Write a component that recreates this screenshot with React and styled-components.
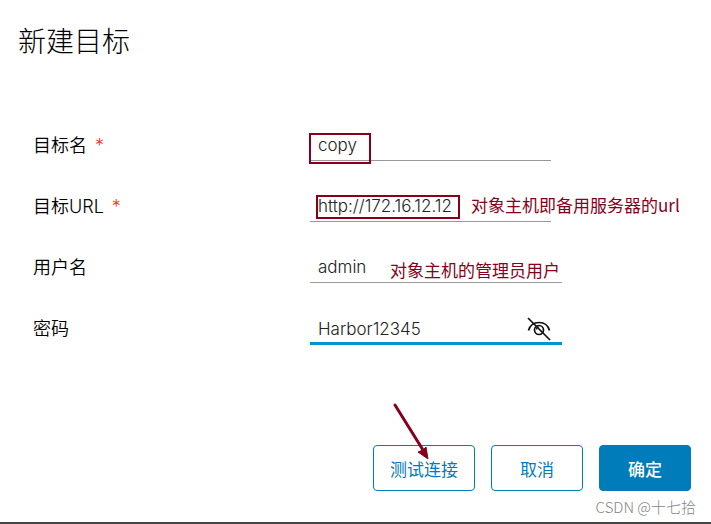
import React, { useState } from "react";
import styled, { createGlobalStyle } from "styled-components";

const GlobalStyle = createGlobalStyle`
  * { box-sizing: border-box; }
  body {
    margin: 0;
    background: #fff;
    color: #111;
    font-family: Inter, "Noto Sans CJK SC", sans-serif;
  }
`;

const MARK = "#86001c";

const Dialog = styled.main`
  position: relative;
  padding: 21px 20px 31px 18px;
  border-bottom: 2px solid #444;
`;

const Title = styled.h1`
  margin: 0;
  font-size: 28px;
  line-height: 42px;
  font-weight: 300;
  color: #000;
`;

const Form = styled.form`
  margin-top: 66px;
`;

const Fields = styled.div`
  display: grid;
  gap: 29px;
  padding-left: 15px;
`;

const Row = styled.div`
  display: grid;
  grid-template-columns: 277px 1fr;
`;

const Label = styled.label`
  font-size: 18px;
  line-height: 33px;
  height: 32px;
  font-weight: 350;
  color: #000;
`;

const Required = styled.span`
  margin-left: 8px;
  color: #dc3d22;
`;

const Control = styled.div`
  position: relative;
  display: flex;
  width: ${(p) => (p.$wide ? 252 : 241)}px;
`;

const Input = styled.input`
  width: 100%;
  height: ${(p) => (p.$active ? 33 : 32)}px;
  padding: ${(p) => (p.$active ? "4px 8px 0" : "0 8px")};
  border: 0;
  border-bottom: ${(p) => (p.$active ? "3px solid #0094d2" : "1px solid #999")};
  border-radius: 0;
  outline: none;
  background: transparent;
  color: #222;
  font: 350 17px "Inter", "Noto Sans CJK SC", sans-serif;
`;

const Toggle = styled.button`
  position: absolute;
  right: 10px;
  top: 4px;
  width: 26px;
  height: 26px;
  padding: 0;
  border: 0;
  background: none;
  color: #111;
  cursor: pointer;
  svg { display: block; }
`;

const Frame = styled.span`
  position: absolute;
  left: ${(p) => p.$left}px;
  top: ${(p) => p.$top}px;
  width: ${(p) => p.$width}px;
  height: ${(p) => p.$height}px;
  border: 2px solid ${MARK};
  pointer-events: none;
`;

const Note = styled.span`
  position: absolute;
  left: ${(p) => p.$left}px;
  top: ${(p) => p.$top}px;
  font-size: 17px;
  line-height: 26px;
  font-weight: 400;
  white-space: nowrap;
  color: ${MARK};
  font-family: "Noto Sans CJK SC", sans-serif;
  pointer-events: none;
`;

const Actions = styled.div`
  display: flex;
  justify-content: flex-end;
  gap: 16px;
  margin-top: 100px;
`;

const Button = styled.button`
  position: relative;
  min-width: 92px;
  height: 46px;
  padding: 0 16px;
  border: 1px solid #007cbb;
  border-radius: 4px;
  background: ${(p) => (p.$primary ? "#007cbb" : "#fff")};
  color: ${(p) => (p.$primary ? "#fff" : "#007cbb")};
  font: ${(p) => (p.$primary ? 500 : 400)} 17px "Noto Sans CJK SC", sans-serif;
  cursor: pointer;
`;

const Arrow = styled.svg`
  position: absolute;
  left: 17px;
  top: -45px;
  pointer-events: none;
`;

const Watermark = styled.small`
  position: absolute;
  right: 15px;
  bottom: 3px;
  font: 300 15px/24px "Noto Sans CJK SC", sans-serif;
  color: #858585;
`;

function EyeOff() {
  return (
    <svg width="26" height="26" viewBox="0 0 26 26" fill="none" stroke="currentColor" strokeWidth="1.7" aria-hidden="true">
      <path d="M2.500 14.500C4 9 8 6.500 13 6.500S22 9 23.500 14.500" />
      <circle cx="13" cy="14" r="4.500" />
      <path d="M10.500 13.500a2.500 2.500 0 0 1 2.500-2.500" strokeWidth="1.200" />
      <path d="M2 2L24 24" />
    </svg>
  );
}

export default function App() {
  const [visible, setVisible] = useState(true);
  return (
    <>
      <GlobalStyle />
      <Dialog>
        <Title>新建目标</Title>
        <Form onSubmit={(e) => e.preventDefault()}>
          <Fields>
            <Row>
              <Label htmlFor="name">目标名<Required>*</Required></Label>
              <Control>
                <Input id="name" defaultValue="copy" />
                <Frame $left={-1} $top={4} $width={62} $height={31} />
              </Control>
            </Row>
            <Row>
              <Label htmlFor="url">目标URL<Required>*</Required></Label>
              <Control>
                <Input id="url" defaultValue="http://172.16.12.12" />
                <Frame $left={6} $top={5} $width={144} $height={24} />
                <Note $left={161} $top={2}>对象主机即备用服务器的url</Note>
              </Control>
            </Row>
            <Row>
              <Label htmlFor="user">用户名</Label>
              <Control $wide>
                <Input id="user" defaultValue="admin" />
                <Note $left={80} $top={6}>对象主机的管理员用户</Note>
              </Control>
            </Row>
            <Row>
              <Label htmlFor="password">密码</Label>
              <Control $wide>
                <Input id="password" $active type={visible ? "text" : "password"} defaultValue="Harbor12345" />
                <Toggle type="button" aria-label="切换密码显示" onClick={() => setVisible(!visible)}>
                  <EyeOff />
                </Toggle>
              </Control>
            </Row>
          </Fields>
          <Actions>
            <Button type="button">
              测试连接
              <Arrow width="42" height="60" viewBox="0 0 42 60" aria-hidden="true">
                <path d="M4 4L32 49" stroke={MARK} strokeWidth="3" strokeLinecap="round" />
                <path d="M37 58L27 51L32 49L35 46Z" fill={MARK} stroke={MARK} strokeLinejoin="round" />
              </Arrow>
            </Button>
            <Button type="button">取消</Button>
            <Button type="submit" $primary>确定</Button>
          </Actions>
        </Form>
        <Watermark>CSDN @十七拾</Watermark>
      </Dialog>
    </>
  );
}
